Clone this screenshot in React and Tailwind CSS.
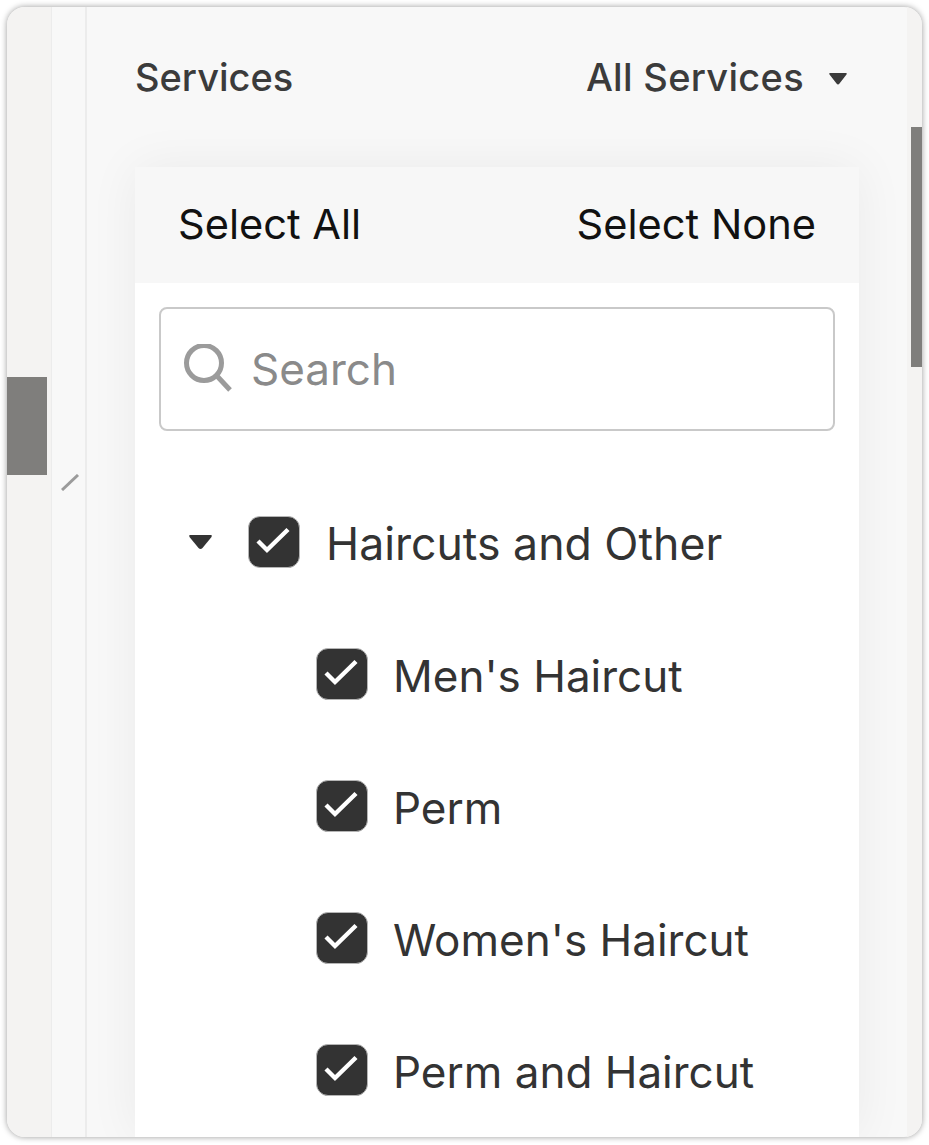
import React from "react";

function Check() {
  return (
    <span className="flex h-[52px] w-[52px] shrink-0 items-center justify-center rounded-[12px] border border-[#b5b5b5] bg-[#333333]">
      <svg width="36" height="30" viewBox="0 0 36 30" fill="none">
        <path d="M2 14 L11 23 L32 2.5" stroke="#ffffff" strokeWidth="4.4" />
      </svg>
    </span>
  );
}

function Row({ label, child }) {
  return (
    <div className={`flex h-[132px] items-center ${child ? "pl-[181px]" : "pl-[53px]"}`}>
      {!child && (
        <svg width="25" height="16" viewBox="0 0 25 16" className="mr-[35px] shrink-0">
          <path d="M2 1 H23 Q24.5 1 23.5 3 L14.5 14 Q12.5 16 10.5 14 L1.5 3 Q0.5 1 2 1 Z" fill="#333333" />
        </svg>
      )}
      <Check />
      <span className={`${child ? "ml-[25px] text-[44px]" : "ml-[26px] text-[44.6px]"} mt-[4px] leading-none text-[#333333]`}>{label}</span>
    </div>
  );
}

export default function App() {
  return (
    <div className="h-[1145px] w-[929px] overflow-hidden bg-white p-[7px] font-['Inter',sans-serif]">
      <div className="flex h-[1130px] w-[915px] overflow-hidden rounded-[18px] bg-[#f8f8f8] shadow-[0_0_6px_rgba(0,0,0,0.4)]">
        <div className="flex w-[45px] shrink-0 flex-col border-r border-[#ececec] bg-[#f4f3f2] pt-[370px]">
          <div className="h-[98px] w-[40px] bg-[#7f7e7c]" />
        </div>
        <div className="flex w-[35px] shrink-0 flex-col items-center border-r-2 border-[#ececec] bg-[#f8f8f8] pt-[467px] pl-[3px]">
          <svg width="18" height="17" viewBox="0 0 18 17">
            <path d="M1 16 L17 1" stroke="#9b9b9b" strokeWidth="3" />
          </svg>
        </div>
        <div className="flex min-w-0 flex-1 flex-col pl-[48px]">
          <div className="flex h-[160px] shrink-0 items-start justify-between pt-[47px] pr-[59px]">
            <span className="text-[38px] font-medium leading-[46px] text-[#3b3b3b]">Services</span>
            <span className="flex items-center text-[38px] font-medium leading-[46px] tracking-[0.3px] text-[#3b3b3b]">
              All Services
              <svg width="20" height="14" viewBox="0 0 20 14" className="ml-[24px] mt-[3px]">
                <path d="M2 1 H18 Q19.5 1 18.5 2.5 L11.5 11.5 Q10 13.5 8.5 11.5 L1.5 2.5 Q0.5 1 2 1 Z" fill="#3b3b3b" />
              </svg>
            </span>
          </div>
          <div className="mr-[48px] flex min-h-0 flex-1 flex-col bg-white shadow-[0_0_48px_rgba(0,0,0,0.06)]">
            <div className="flex h-[116px] shrink-0 items-center justify-between bg-[#f7f7f7] px-[43px] text-[41.6px] leading-none text-[#111111]">
              <span>Select All</span>
              <span>Select None</span>
            </div>
            <div className="px-[24px] pt-[24px]">
              <div className="flex h-[124px] items-center rounded-[8px] border-2 border-[#c9c9c9] bg-white pl-[22px]">
                <svg width="50" height="50" viewBox="0 0 50 50" fill="none" className="shrink-0">
                  <circle cx="21" cy="19" r="17.5" stroke="#9b9b9b" strokeWidth="5" />
                  <path d="M34 32 L47 46" stroke="#9b9b9b" strokeWidth="5" />
                </svg>
                <span className="ml-[18px] text-[44px] leading-none text-[#8a8a8a]">Search</span>
              </div>
            </div>
            <div className="pt-[45px]">
              <Row label="Haircuts and Other" />
              <Row label="Men's Haircut" child />
              <Row label="Perm" child />
              <Row label="Women's Haircut" child />
              <Row label="Perm and Haircut" child />
            </div>
          </div>
        </div>
        <div className="flex w-[15px] shrink-0 justify-end bg-[#f4f3f2] pt-[120px]">
          <div className="h-[240px] w-[11px] bg-[#7f7e7c]" />
        </div>
      </div>
    </div>
  );
}
